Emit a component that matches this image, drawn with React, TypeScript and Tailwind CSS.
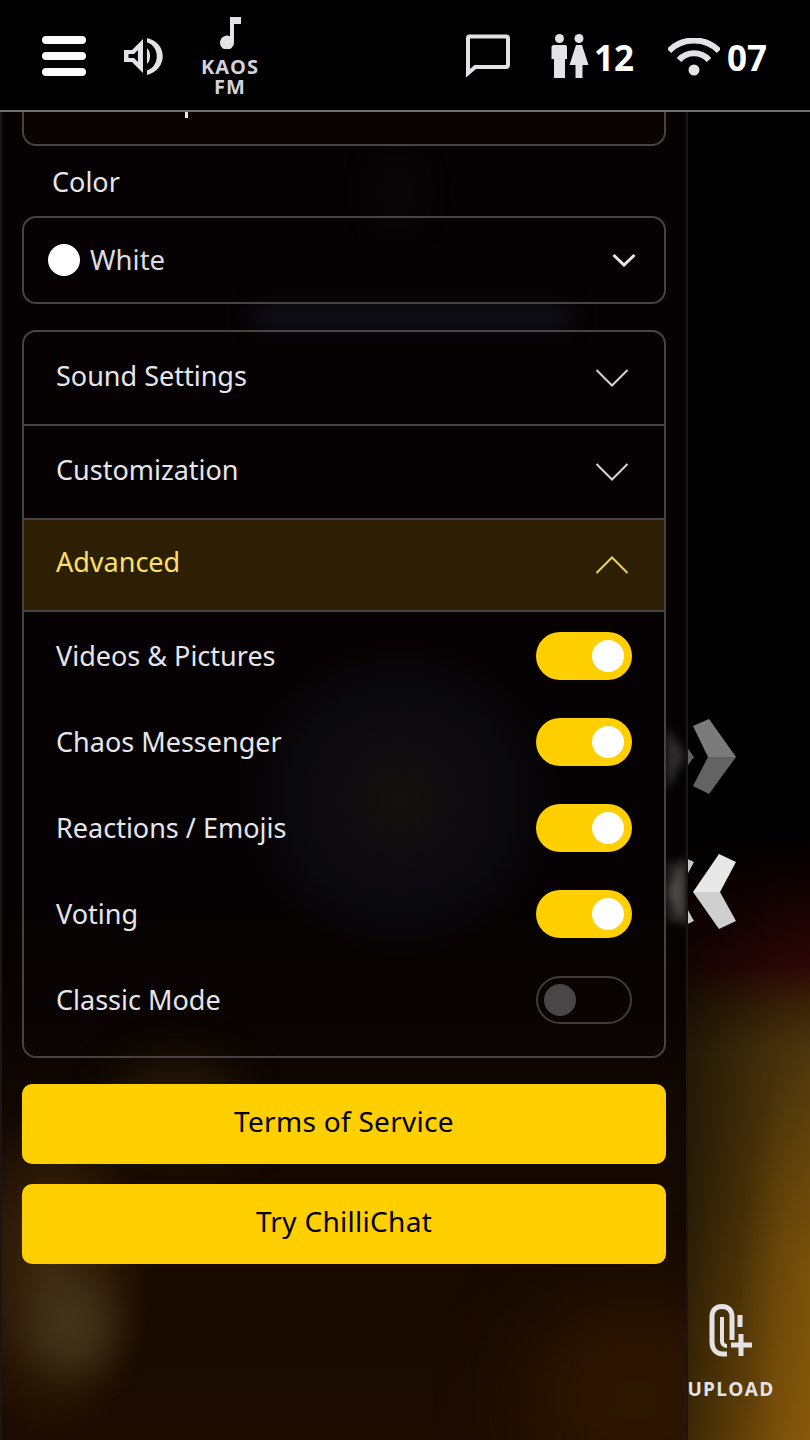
const font = "font-['Noto_Sans','Open_Sans',sans-serif]";

function Chevron({ up, className }: { up?: boolean; className: string }) {
  return (
    <svg width="34" height="20" viewBox="0 0 34 20" fill="none" className={className}>
      <path d={up ? "M1.5 18 L17 2.5 L32.5 18" : "M1.5 2 L17 17.5 L32.5 2"} stroke="currentColor" strokeWidth="2" />
    </svg>
  );
}

function Toggle({ on }: { on: boolean }) {
  if (on) {
    return (
      <div className="flex h-12 w-24 items-center justify-end rounded-full bg-[#ffcf00] pr-2">
        <div className="h-8 w-8 rounded-full bg-white" />
      </div>
    );
  }
  return (
    <div className="flex h-12 w-24 items-center rounded-full border-2 border-[#3f3b3b] pl-[6px]">
      <div className="h-8 w-8 rounded-full bg-[#4a4648]" />
    </div>
  );
}

function AccordionRow({ label }: { label: string }) {
  return (
    <div className="flex h-[94px] items-center justify-between border-b-2 border-[#474343] pl-8 pr-[35px] text-[27px] text-[#e6e6ea]">
      <span className="pb-[4px]">{label}</span>
      <Chevron className="text-[#d4d4d8]" />
    </div>
  );
}

const toggles = [
  { label: "Videos & Pictures", on: true },
  { label: "Chaos Messenger", on: true },
  { label: "Reactions / Emojis", on: true },
  { label: "Voting", on: true },
  { label: "Classic Mode", on: false },
];

function Header() {
  return (
    <header className="relative z-30 flex h-[112px] shrink-0 items-start justify-between border-b-2 border-[#6f6f6f] bg-black font-['Open_Sans',sans-serif]">
      <div className="flex items-start">
        <div className="ml-[42px] mt-[36px] flex w-11 flex-col gap-[8px]">
          <div className="h-[8px] rounded-full bg-white" />
          <div className="h-[8px] rounded-full bg-white" />
          <div className="h-[8px] rounded-full bg-white" />
        </div>
        <svg width="42" height="40" viewBox="0 0 42 40" className="ml-[37px] mt-[37px] text-[#e3e3e6]">
          <path d="M1 13 H9 L20 2 V36 L9 25 H1 Z M5.5 17 V21 H11 L15 25 V13 L11 17 Z" fill="currentColor" fillRule="evenodd" />
          <path d="M24 11 C28 14 28 24 24 27 Z" fill="currentColor" />
          <path d="M24 1 C45 6 45 32 24 38 L24 33.5 C37 29 37 9 24 5.5 Z" fill="currentColor" />
        </svg>
        <div className="ml-[34px] flex w-[62px] flex-col items-center pt-[17px] text-[#d3d3d9]">
          <svg width="22" height="32" viewBox="0 0 22 32">
            <path d="M11 0 H22 V7 H15 V25 A7 7 0 1 1 11 19.3 Z" fill="#e3e3e6" />
          </svg>
          <span className="mt-[8px] w-full text-center text-[20px] font-bold leading-[20px] tracking-[1px]">KAOS FM</span>
        </div>
      </div>
      <div className="flex items-start text-white">
        <svg width="46" height="44" viewBox="0 0 46 44" className="mt-[34px] text-[#e3e3e6]">
          <path d="M4 0.5 H41 Q45 0.5 45 4.5 V31 Q45 35 41 35 H11 L1 43.5 V4.5 Q1 0.5 4 0.5 Z M5 4.5 V35 L9.5 31 H41 V4.5 Z" fill="currentColor" fillRule="evenodd" />
        </svg>
        <svg width="38" height="44" viewBox="0 0 38 44" className="ml-[40px] mt-[34px] text-[#e3e3e6]">
          <circle cx="8.5" cy="4.5" r="4.5" fill="currentColor" />
          <circle cx="28" cy="4.5" r="4.5" fill="currentColor" />
          <path d="M3 11 H14 Q16 11 16 13 V25 H14 V44 H3 V25 H0.5 V13 Q0.5 11 3 11 Z" fill="currentColor" />
          <path d="M25 11 H31 L37.5 31 H31.5 V44 H24.5 V31 H18.5 Z" fill="currentColor" />
        </svg>
        <span className="ml-[5px] mt-[34px] text-[35px] font-bold leading-[48px]">12</span>
        <svg width="52" height="38" viewBox="0 0 52 38" className="ml-[34px] mt-[38px] text-[#e3e3e6]">
          <path d="M1 13 C14 -1 38 -1 51 13" stroke="currentColor" strokeWidth="6" fill="none" />
          <path d="M11 22 C19 13 33 13 41 22" stroke="currentColor" strokeWidth="6" fill="none" />
          <circle cx="26" cy="32" r="5.5" fill="currentColor" />
        </svg>
        <span className="ml-[7px] mr-[43px] mt-[34px] text-[35px] font-bold leading-[48px]">07</span>
      </div>
    </header>
  );
}

// nav arrows float over the video, their left part shows blurred through the panel
function NavArrows() {
  return (
    <>
      <svg width="43" height="76" viewBox="0 0 43 76" className="absolute left-[651px] top-[719px]">
        <path d="M0 7 L16 0 L43 38 L16 75 L0 67 L15 38 Z" fill="#5f5f5f" />
      </svg>
      <svg width="43" height="76" viewBox="0 0 43 76" className="absolute left-[693px] top-[719px]">
        <path d="M0 7 L16 0 L43 38 H15 Z" fill="#7b7b7b" />
        <path d="M43 38 L16 75 L0 67 L15 38 Z" fill="#636363" />
      </svg>
      <svg width="43" height="76" viewBox="0 0 43 76" className="absolute left-[651px] top-[854px]">
        <path d="M43 8 L26 0 L0 38 L26 75 L43 67 L27 38 Z" fill="#c8c8c8" />
      </svg>
      <svg width="43" height="76" viewBox="0 0 43 76" className="absolute left-[693px] top-[854px]">
        <path d="M43 8 L26 0 L0 38 H27 Z" fill="#e8e8e8" />
        <path d="M0 38 L26 75 L43 67 L27 38 Z" fill="#cfcfcf" />
      </svg>

      <div className="absolute left-[666px] top-[712px] z-20 h-[230px] w-[20px] overflow-hidden">
        <svg width="20" height="230" viewBox="0 0 20 230" className="blur-[4px]">
          <path d="M0 14 L20 43 L0 80 Z" fill="#2c2c2c" />
          <path d="M20 144 L0 180 L20 216 Z" fill="#504d4d" />
          <path d="M0 150 H20 V210 H0 Z" fill="#444141" opacity="0.5" />
        </svg>
      </div>
    </>
  );
}

export default function App() {
  return (
    <div className={`relative flex h-[1440px] w-[810px] flex-col overflow-hidden bg-black ${font}`}>
      {/* blurred video glow behind the panel */}
      <div className="absolute inset-0 bg-[linear-gradient(180deg,#000_0%,#000_58%,#1c0303_64%,#2c0606_67%,#3a2407_70%,#4c360d_73%,#5c3f0a_84%,#86580a_100%)]" />
      <div className="absolute inset-0 bg-[linear-gradient(90deg,rgba(0,0,0,0.55)_0%,rgba(0,0,0,0.55)_85%,rgba(0,0,0,0.1)_96%,transparent_100%)]" />
      <div className="absolute inset-0 bg-[radial-gradient(ellipse_70px_220px_at_810px_1270px,rgba(150,100,10,0.4)_0%,transparent_100%)]" />

      <NavArrows />

      <Header />

      <div className="relative z-10 flex min-h-0 flex-1">
        <aside className="relative h-full w-[688px] shrink-0 overflow-hidden border-x-2 border-[#1b1516] bg-[linear-gradient(180deg,#060203_0%,#060203_60%,#0a0302_68%,#120802_76%,#180a00_88%,#1c0c00_100%)] px-[20px]">
          <div className="absolute left-[238px] top-[528px] h-[320px] w-[320px] bg-[radial-gradient(closest-side,#14100e_0%,#0d0b0e_40%,#09080c_70%,transparent_100%)]" />
          <div className="absolute left-[370px] top-[40px] h-[80px] w-[50px] rounded-full bg-[#121012] opacity-30 blur-[14px]" />
          <div className="absolute left-[250px] top-[194px] h-[22px] w-[320px] rounded-full bg-[#10111a] blur-[10px]" />
          <div className="absolute left-[-50px] top-[990px] h-[340px] w-[200px] bg-[radial-gradient(closest-side,#3c2a10_0%,#2c1a06_55%,transparent_100%)]" />
          <div className="absolute left-[30px] top-[1170px] h-[90px] w-[80px] rounded-full bg-[#4a3c22] opacity-70 blur-[18px]" />
          <div className="absolute left-[110px] top-[950px] h-[100px] w-[130px] rounded-full bg-[#241806] blur-[20px]" />
          <div className="absolute bottom-[-60px] right-[-60px] h-[200px] w-[220px] rounded-full bg-[#2c1600] blur-[40px]" />

          <div className="relative">
            <div className="h-[34px] rounded-b-[14px] border-2 border-t-0 border-[#474343] bg-[#0a0203] pl-[161px]">
              <div className="h-[6px] w-[3px] bg-[#e6e6ea]" />
            </div>

            <div className="pl-[30px] pt-[18px] text-[27px] leading-[36px] text-[#e6e6ea]">Color</div>

            <div className="mt-[16px] flex h-[88px] items-center justify-between rounded-[14px] border-2 border-[#474343] pl-[24px] pr-[28px]">
              <div className="flex items-center gap-[10px] text-[27.5px] text-[#dcdce2]">
                <div className="h-8 w-8 rounded-full bg-white" />
                <span>White</span>
              </div>
              <svg width="24" height="14" viewBox="0 0 24 14" fill="none" className="text-[#e6e6ea]">
                <path d="M1.5 2 L12 12 L22.5 2" stroke="currentColor" strokeWidth="3" />
              </svg>
            </div>

            <div className="mt-[26px] overflow-hidden rounded-[14px] border-2 border-[#474343]">
              <AccordionRow label="Sound Settings" />
              <AccordionRow label="Customization" />
              <div className="flex h-[92px] items-center justify-between border-b-2 border-[#474343] bg-[#2c1f04] pl-8 pr-[35px] text-[27px] text-[#ffe066]">
                <span className="pb-[6px]">Advanced</span>
                <Chevron up className="text-[#ecd264]" />
              </div>
              <div className="flex flex-col gap-[38px] pb-[32px] pl-8 pr-[32px] pt-[20px]">
                {toggles.map((item) => (
                  <div key={item.label} className="flex items-center justify-between text-[27px] text-[#e6e6ea]">
                    <span>{item.label}</span>
                    <Toggle on={item.on} />
                  </div>
                ))}
              </div>
            </div>

            <div className="mt-[26px] flex flex-col gap-5">
              <div className="flex h-20 items-center justify-center rounded-[10px] bg-[#ffcf00] pb-[6px] text-[28px] tracking-[0.3px] text-black">Terms of Service</div>
              <div className="flex h-20 items-center justify-center rounded-[10px] bg-[#ffcf00] pb-[6px] text-[28px] tracking-[0.3px] text-black">Try ChilliChat</div>
            </div>
          </div>
        </aside>

        <div className="flex min-w-0 flex-1 flex-col items-center justify-end pb-[39px]">
          <div className="flex w-[86px] -translate-x-[18px] flex-col items-center text-[#e3e3e6]">
            <svg width="44" height="54" viewBox="0 0 44 54" fill="none" className="shrink-0">
              <path d="M18 50 H14 C7 50 3 45 3 38 V13 C3 6 7 2.5 13 2.5 C19 2.5 23 6 23 13 V36" stroke="currentColor" strokeWidth="5" />
              <path d="M13 13 V37 C13 40 15 42 18 42" stroke="currentColor" strokeWidth="4" />
              <path d="M31 11 V23 M32 30 V52 M22 41 H43" stroke="currentColor" strokeWidth="5" />
            </svg>
            <span className="mt-[19px] whitespace-nowrap font-['Open_Sans',sans-serif] text-[19px] font-bold leading-[24px] tracking-[1.3px]">UPLOAD</span>
          </div>
        </div>
      </div>
    </div>
  );
}
